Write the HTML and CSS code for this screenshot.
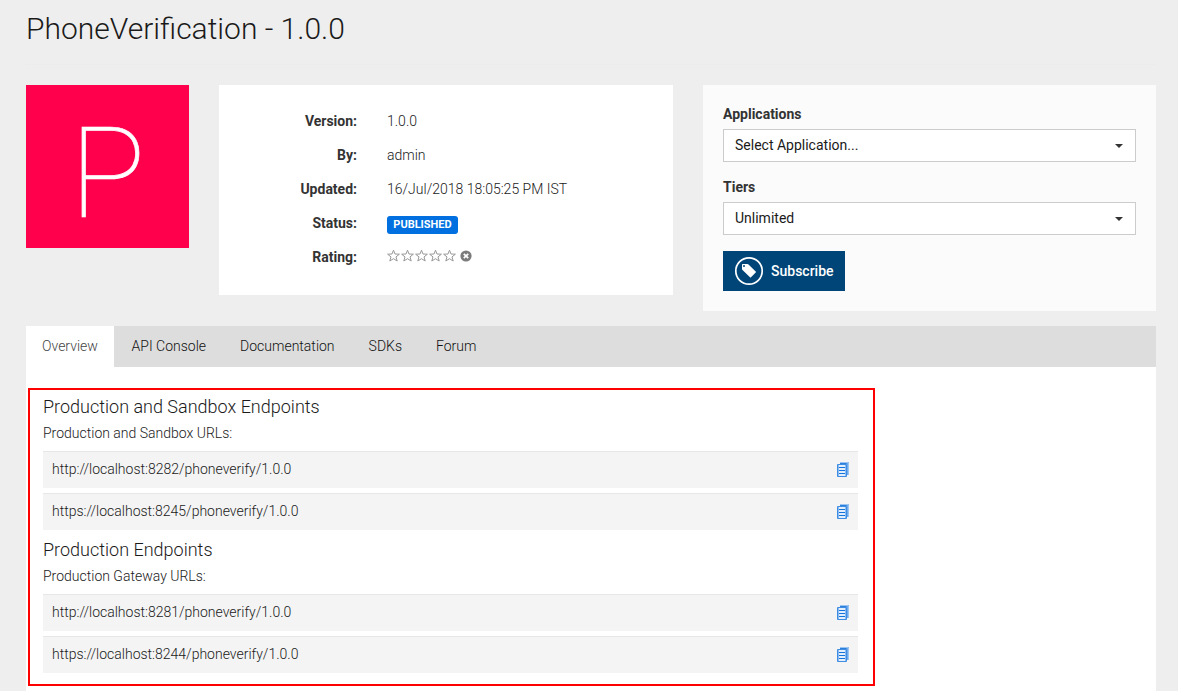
FILE: index.html
```
<!DOCTYPE html>
<html lang="en">
<head>
<meta charset="utf-8">
<title>PhoneVerification - 1.0.0</title>
<link rel="stylesheet" href="styles.css">
</head>
<body>
<svg class="defs" width="0" height="0" aria-hidden="true">
  <symbol id="star" viewBox="0 0 14 14"><path d="M6.5 1.200 8 5 12.400 5.200 9 7.900 10.200 12 6.500 9.700 2.800 12 4 7.900 .6 5.200 5 5Z" fill="none" stroke="#999" stroke-width="1"/></symbol>
  <symbol id="copy" viewBox="0 0 12 15">
    <path d="M3 0h9v13H9V2H3z" fill="#6faaea"/>
    <path d="M3 .5h8.500v12.500" fill="none" stroke="#9cc5f1"/>
    <path d="M3 1.500h6.500" stroke="#2d7fdc"/>
    <path d="M.5 2.500h9v12h-9z" fill="#e3effc" stroke="#3f8de2"/>
    <path d="M1.500 3v11M8.500 3v11" stroke="#8abaf0"/>
    <path d="M2 5.500h6M2 8.500h6M2 11.500h6" stroke="#1274dc"/>
  </symbol>
</svg>
<main class="page">
  <h1 class="title">PhoneVerification - 1.0.0</h1>
  <div class="summary">
    <div class="thumb">P</div>
    <dl class="details">
      <dt>Version:</dt><dd>1.0.0</dd>
      <dt>By:</dt><dd>admin</dd>
      <dt>Updated:</dt><dd>16/Jul/2018 18:05:25 PM IST</dd>
      <dt>Status:</dt><dd><span class="badge">PUBLISHED</span></dd>
      <dt>Rating:</dt>
      <dd class="rating">
        <svg><use href="#star"/></svg><svg><use href="#star"/></svg><svg><use href="#star"/></svg><svg><use href="#star"/></svg><svg><use href="#star"/></svg>
        <svg class="clear" viewBox="0 0 12 12"><circle cx="6" cy="6" r="5.600" fill="#7b7b7b"/><path d="M3.800 3.800l4.400 4.400M8.200 3.800l-4.400 4.400" stroke="#fff" stroke-width="1.700"/></svg>
      </dd>
    </dl>
    <div class="subscribe">
      <div class="label">Applications</div>
      <div class="select"><span>Select Application...</span><i class="caret"></i></div>
      <div class="label">Tiers</div>
      <div class="select"><span>Unlimited</span><i class="caret"></i></div>
      <button class="button">
        <svg width="30" height="30" viewBox="0 0 30 30"><circle cx="15" cy="15" r="13.200" fill="none" stroke="#fff" stroke-width="1.700"/><path d="M8 8.800Q8 8.100 8.700 8.100H13.400Q14 8.100 14.500 8.600L21.700 15.600Q22.200 16.100 21.700 16.600L17 21.300Q16.500 21.800 16 21.300L8.500 14Q8 13.500 8 13Z" fill="#fff"/><circle cx="10" cy="10.100" r="1" fill="#004578"/></svg>
        <span>Subscribe</span>
      </button>
    </div>
  </div>
  <nav class="tabs">
    <a class="tab active">Overview</a><a class="tab">API Console</a><a class="tab">Documentation</a><a class="tab">SDKs</a><a class="tab">Forum</a>
  </nav>
  <div class="panel">
    <section class="endpoints">
      <h2>Production and Sandbox Endpoints</h2>
      <p>Production and Sandbox URLs:</p>
      <div class="url"><span>http://localhost:8282/phoneverify/1.0.0</span><svg><use href="#copy"/></svg></div>
      <div class="url"><span>https://localhost:8245/phoneverify/1.0.0</span><svg><use href="#copy"/></svg></div>
      <h2>Production Endpoints</h2>
      <p>Production Gateway URLs:</p>
      <div class="url"><span>http://localhost:8281/phoneverify/1.0.0</span><svg><use href="#copy"/></svg></div>
      <div class="url"><span>https://localhost:8244/phoneverify/1.0.0</span><svg><use href="#copy"/></svg></div>
    </section>
  </div>
</main>
</body>
</html>
```
FILE: styles.css
```
* { box-sizing: border-box; }
body {
  margin: 0;
  height: 691px;
  overflow: hidden;
  background: #eee;
  color: #1a1a1a;
  font: 300 14px/20px Roboto, sans-serif;
}
.defs { display: block; position: absolute; }
.page { width: 1130px; margin-left: 26px; display: flex; flex-direction: column; height: 691px; }
.title { margin: 0 0 20px; padding-top: 10px; height: 65px; border-bottom: 1px solid #ececec; font-size: 30px; line-height: 38px; font-weight: 300; white-space: nowrap; }
.summary { display: grid; grid-template-columns: 163px 454px 453px; column-gap: 30px; align-items: start; height: 241px; flex: none; }
.thumb { height: 163px; background: #ff004d; color: #fff; font-size: 126px; line-height: 179px; font-weight: 100; text-align: center; padding-left: 0; -webkit-text-stroke: 0.7px #fff; }
.details { margin: 0; height: 210px; padding-top: 19px; background: #fff; display: grid; grid-template-columns: 138px 1fr; grid-auto-rows: 34px; column-gap: 30px; line-height: 34px; }
.details dt { text-align: right; font-weight: 700; color: #333; }
.details dd { margin: 0; }
.badge { display: block; width: 71px; height: 18px; margin-top: 10px; border-radius: 3px; background: #0070e0; color: #fff; font-size: 11px; line-height: 17px; font-weight: 700; text-align: center; }
.rating { display: flex; padding-top: 9px; }
.rating svg { width: 14px; height: 14px; }
.rating .clear { width: 12px; height: 12px; margin: 1px 0 0 3px; }
.subscribe { height: 226px; padding: 19px 20px 0; background: #fbfbfb; }
.label { font-weight: 700; height: 25px; color: #333; }
.select { display: flex; justify-content: space-between; align-items: center; height: 33px; margin-bottom: 15px; padding: 0 12px 1px 11px; border: 1px solid #ccc; background: #fff; font-weight: 400; }
.caret { border: 4px solid transparent; border-top-color: #333; border-bottom: 0; margin-top: 2px; }
.button { display: flex; align-items: center; gap: 7px; width: 122px; height: 40px; margin-top: 16px; padding: 0 0 1px 11px; border: 0; background: #004578; color: #fff; font: 500 14px/20px Roboto, sans-serif; }
.tabs { display: flex; flex: none; height: 41px; background: #ddd; }
.tab { padding: 10px 17px; color: #111; white-space: nowrap; }
.tab.active { width: 88px; padding-left: 16px; margin-right: 0.6px; background: #fff; color: #444; }
.panel { flex: 1; padding: 21px 0 0 2px; background: #fff; }
.endpoints { width: 847px; height: 298px; padding: 6px 15px 0 13px; border: 2px solid #f00; }
.endpoints h2 { margin: 0; font-size: 18px; line-height: 21px; font-weight: 300; height: 27px; }
.endpoints p { margin: 0; height: 28px; }
.url { display: flex; justify-content: space-between; height: 37px; margin-bottom: 5px; padding: 7px 9px; background: #f4f4f4; border-top: 1px solid #e7e7e7; }
.url svg { width: 12px; height: 15px; margin-top: 3px; }
.url + h2 { margin-top: 9px; }
```
